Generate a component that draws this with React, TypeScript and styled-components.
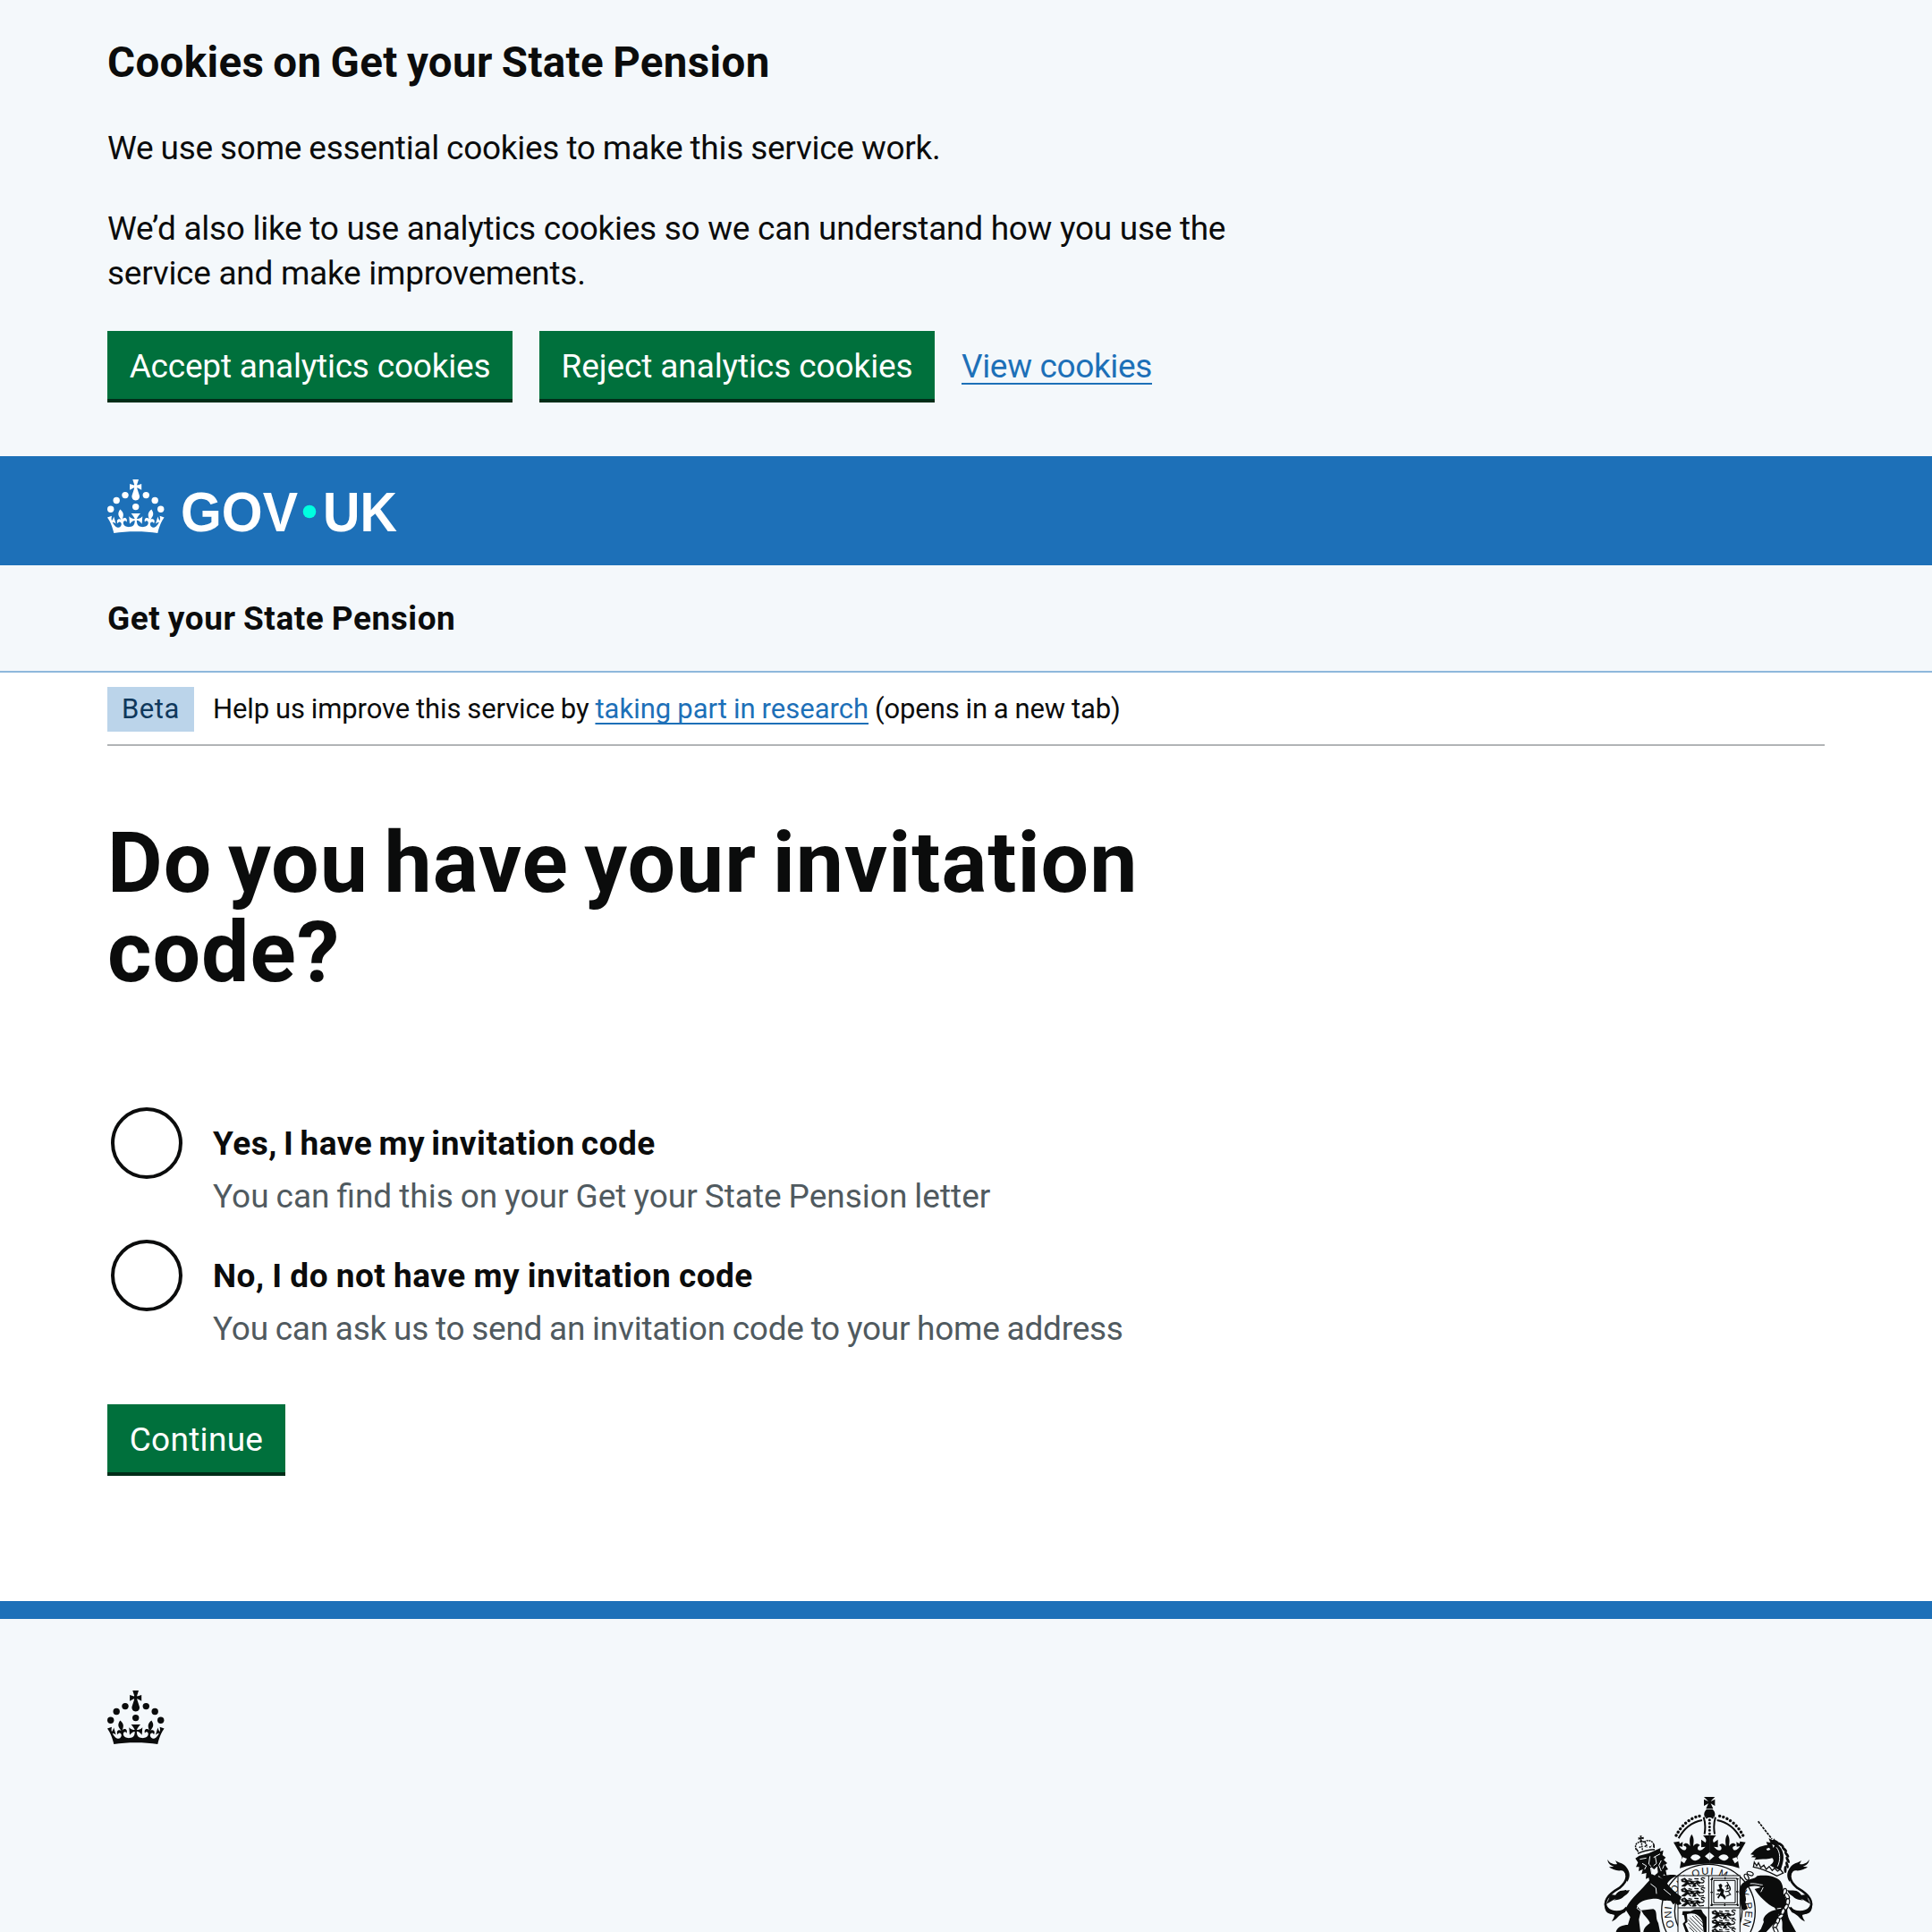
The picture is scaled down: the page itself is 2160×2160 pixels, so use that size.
import React from 'react';
import styled, { createGlobalStyle } from 'styled-components';

const INK = '#0b0c0c';
const PALE = '#f4f8fb';
const BRAND = '#1d70b8';

const GlobalStyle = createGlobalStyle`
  *, *::before, *::after { box-sizing: border-box; }
  body {
    margin: 0;
    background: #fff;
    color: ${INK};
    font-family: Roboto, "Noto Sans", sans-serif;
    font-size: 37px;
    line-height: 50px;
  }
  h1, h2, p { margin: 0; }
`;

interface Spacing {
  $track?: number;
  $word?: number;
}

const Page = styled.div`
  display: flex;
  flex-direction: column;
  height: 2160px;
  overflow: hidden;
`;

const Container = styled.div`
  margin: 0 120px;
`;

const CookieBanner = styled.section`
  height: 510px;
  padding-top: 40px;
  background: ${PALE};
`;

const BannerContent = styled.div`
  display: flex;
  flex-direction: column;
  gap: 40px;
  white-space: nowrap;
`;

const BannerHeading = styled.h2`
  font-size: 47.5px;
  line-height: 60px;
  letter-spacing: 0.35px;
  word-spacing: -2px;
`;

const Copy = styled.p<Spacing>`
  padding-top: 1px;
  margin-bottom: -1px;
  letter-spacing: ${(p) => p.$track ?? 0}px;
  word-spacing: ${(p) => p.$word ?? 0}px;
`;

const ButtonGroup = styled.div`
  display: flex;
  align-items: flex-start;
  gap: 30px;
`;

const Button = styled.button<{ $width: number; $track?: number }>`
  width: ${(p) => p.$width}px;
  height: 80px;
  padding: 15px 0 11px;
  border: 0;
  border-bottom: 4px solid #002d18;
  background: #00703c;
  color: #fff;
  font: inherit;
  letter-spacing: ${(p) => p.$track ?? -0.2}px;
  text-align: center;
  white-space: nowrap;
`;

const Link = styled.a<{ $gap?: number; $track?: number }>`
  color: ${BRAND};
  letter-spacing: ${(p) => p.$track ?? 0}px;
  text-decoration: underline;
  text-decoration-thickness: 2px;
  text-decoration-skip-ink: none;
  text-underline-offset: ${(p) => p.$gap ?? 6}px;
`;

const BannerLink = styled(Link)`
  padding-top: 15px;
`;

const Header = styled.header`
  height: 122px;
  padding-top: 26px;
  background: ${BRAND};
  color: #fff;
`;

const Logo = styled.svg`
  display: block;
  overflow: visible;
`;

const LogoText = styled.text`
  font-family: "Liberation Sans", Arial, sans-serif;
  font-weight: 700;
  font-size: 63px;
`;

const GarterText = styled.text`
  font-family: "Liberation Sans", Arial, sans-serif;
  font-size: 34px;
  letter-spacing: 4px;
  text-anchor: middle;
`;

const ServiceNavigation = styled.div`
  height: 120px;
  padding-top: 35px;
  border-bottom: 2px solid #8eb8dc;
  background: ${PALE};
  font-weight: 700;
  letter-spacing: 0.55px;
  word-spacing: -1.3px;
`;

const PhaseBanner = styled.div`
  display: flex;
  height: 82px;
  padding-top: 16px;
  border-bottom: 2px solid #b1b4b6;
  font-size: 31px;
  white-space: pre;
`;

const Tag = styled.strong`
  width: 97px;
  height: 50px;
  margin-right: 21px;
  background: #bbd4ea;
  color: #0f385c;
  font-weight: 400;
  letter-spacing: 0.6px;
  text-align: center;
`;

const PhaseText = styled.span`
  letter-spacing: -0.1px;
  word-spacing: -0.7px;
`;

const Main = styled.main`
  display: flex;
  flex-direction: column;
  align-items: flex-start;
  height: 956px;
  padding-top: 81px;
`;

const Title = styled.h1`
  width: 1260px;
  font-size: 95px;
  line-height: 100px;
  letter-spacing: 1px;
  word-spacing: -7px;
`;

const Radios = styled.div`
  display: flex;
  flex-direction: column;
  margin: 123px 0 36px;
`;

const RadioItem = styled.div`
  display: flex;
  height: 148px;
  padding-left: 4px;
`;

const RadioCircle = styled.span`
  flex: none;
  width: 80px;
  height: 80px;
  margin-right: 34px;
  border: 4px solid ${INK};
  border-radius: 50%;
`;

const RadioText = styled.div`
  display: flex;
  flex-direction: column;
  gap: 8px;
  padding-top: 16px;
  white-space: nowrap;
`;

const RadioLabel = styled.label<Spacing>`
  font-weight: 700;
  letter-spacing: ${(p) => p.$track}px;
  word-spacing: ${(p) => p.$word}px;
`;

const Hint = styled(Copy)`
  color: #505a5f;
`;

const Footer = styled.footer`
  flex: 1;
  min-height: 0;
  padding-top: 80px;
  border-top: 20px solid ${BRAND};
  background: ${PALE};
`;

const CrestRow = styled.div`
  display: flex;
  justify-content: flex-end;
  margin-top: 50px;
`;

const Crown = () => (
  <g fill="currentColor">
    <circle cx="20" cy="17.6" r="3.7" />
    <circle cx="10.2" cy="23.5" r="3.7" />
    <circle cx="3.7" cy="33.2" r="3.7" />
    <circle cx="31.7" cy="30.6" r="3.7" />
    <circle cx="43.3" cy="17.6" r="3.7" />
    <circle cx="53.2" cy="23.5" r="3.7" />
    <circle cx="59.7" cy="33.2" r="3.7" />
    <path d="M33.1,9.8c.2-.1.3-.3.5-.5l4.6,2.4v-6.8l-4.6,1.5c-.1-.2-.3-.3-.5-.5l1.9-5.9h-6.7l1.9,5.9c-.2.1-.3.3-.5.5l-4.6-1.5v6.8l4.6-2.4c.1.2.3.3.5.5l-2.6,8c-.9,2.8,1.2,5.7,4.1,5.7h0c3,0,5.1-2.9,4.1-5.7l-2.6-8ZM37,37.9s-3.4,3.8-4.1,6.1c2.2,0,4.2-.5,6.4-2.8l-.7,8.5c-2-2.8-4.4-4.1-5.7-3.8.1,3.1.5,6.7,5.8,7.2,3.7.3,6.7-1.5,7-3.8.4-2.6-2-4.3-3.7-1.6-1.4-4.5,2.4-6.1,4.9-3.2-1.9-4.5-1.8-7.7,2.4-10.9,3,4,2.6,7.3-1.2,11.1,2.4-1.3,6.2,0,4,4.6-1.2-2.8-3.7-2.2-4.2.2-.3,1.7.7,3.7,3,4.2,1.9.3,4.7-.9,7-5.9-1.3,0-2.4.7-3.9,1.7l2.4-8c.6,2.3,1.4,3.7,2.2,4.5.6-1.6.5-2.8,0-5.3l5,1.8c-2.6,3.6-5.2,8.7-7.3,17.5-7.4-1.1-15.7-1.7-24.5-1.7h0c-8.8,0-17.1.6-24.5,1.7-2.1-8.9-4.7-13.9-7.3-17.5l5-1.8c-.5,2.5-.6,3.7,0,5.3.8-.8,1.6-2.3,2.2-4.5l2.4,8c-1.5-1-2.6-1.7-3.9-1.7,2.3,5,5.2,6.2,7,5.9,2.3-.4,3.3-2.4,3-4.2-.5-2.4-3-3.1-4.2-.2-2.2-4.6,1.6-6,4-4.6-3.7-3.7-4.2-7.1-1.2-11.1,4.2,3.2,4.3,6.4,2.4,10.9,2.5-2.8,6.3-1.3,4.9,3.2-1.8-2.7-4.1-1-3.7,1.6.3,2.3,3.3,4.1,7,3.8,5.4-.5,5.7-4.2,5.8-7.2-1.3-.2-3.7,1-5.7,3.8l-.7-8.5c2.2,2.3,4.2,2.7,6.4,2.8-.7-2.3-4.1-6.1-4.1-6.1h10.6,0Z" />
  </g>
);

const Tail = () => (
  <g>
    <path d="M98 260C124 280 122 308 92 332C50 356 36 380 50 404C62 424 96 424 116 398" fill="none" stroke={INK} strokeWidth="8" />
    <path d="M52 237C60 252 76 254 84 252L78 240C90 250 104 246 116 264C128 280 128 296 118 312C114 290 110 272 96 274C82 276 64 268 57 262L73 261C60 256 52 248 52 237Z" />
    <path d="M126 339C108 344 92 334 78 356L56 353C62 362 54 372 48 386L72 372C90 362 116 366 126 339Z" />
    <path d="M112 352C106 368 90 372 72 374L94 358Z" />
    <path d="M44 385C38 410 52 420 68 420C80 420 74 430 66 445C84 438 86 424 110 414L124 392C100 414 66 412 54 398Z" />
  </g>
);

/* One lion passant, repeated down a quarter of the shield. */
const LionPassant = ({ x, y }: { x: number; y: number }) => (
  <g transform={`translate(${x} ${y})`}>
    <path
      d="M0 6L12 1L20 9L13 15L2 13ZM16 10C28 5 38 16 50 11C58 8 62 13 64 20L52 19C44 24 34 20 24 20L12 29L1 28L13 19ZM44 16L50 29L36 30"
      stroke={INK}
      strokeWidth="2"
      strokeLinejoin="round"
    />
    <path d="M60 15C76 22 82 9 70 7C62 3 70 -3 80 3M22 20L33 29M52 20L62 29L76 27M24 4L36 6M44 3L58 4" stroke={INK} strokeWidth="3.5" fill="none" />
    <path d="M6 8L13 9M24 14L31 16M42 17L50 14" stroke={PALE} strokeWidth="2.5" />
  </g>
);

const CrownHalf = () => (
  <g>
    <path d="M360 91C326 98 292 128 277 168" fill="none" stroke={INK} strokeWidth="10" strokeLinecap="round" strokeDasharray="0.1 13" />
    <path d="M369 105C332 112 306 136 290 166" fill="none" stroke={INK} strokeWidth="6" />
    <path d="M374 95C380 112 380 134 377 152" fill="none" stroke={INK} strokeWidth="6" />
    <path d="M273 179L292 176L294 184L304 178L303 194L292 192C300 206 312 210 316 200C318 190 308 194 306 188C312 178 324 182 328 192C330 184 322 170 334 152C346 170 338 184 340 192C346 180 358 182 362 190C354 192 352 200 356 205C364 210 374 200 380 194L366 196V170L380 180C386 172 380 164 372 156H394.500V251Q340 250 294 266L301 228Z" />
    <path d="M330 230C336 218 354 216 364 229C356 243 338 245 330 230Z" fill={PALE} />
    <path d="M297 241L304 229L318 234L309 250Z" fill={PALE} />
    <path d="M394.500 212L378 226L394.500 240Z" fill={PALE} />
  </g>
);

const Lion = () => (
  <g>
    <path d="M205 293C236 288 252 322 278 346L300 362L294 376L300 386L286 390L280 382L272 388L264 376L250 374C238 378 226 368 214 368C190 368 162 374 150 392L164 408L157 438L162 480H80C84 462 104 456 120 456L128 430L112 404C122 376 154 350 182 318Z" />
    <path d="M165 407L205 403C222 410 210 432 222 450L228 480H172C174 462 188 456 194 450C188 432 176 430 165 407Z" />
    <path d="M238 290C254 292 268 284 288 292C266 296 254 312 248 326L232 312Z" />
    <path d="M196 318L214 332L216 352M158 388L150 400L165 412M240 336L264 356" fill="none" stroke={PALE} strokeWidth="3" />
    <path d="M145 233L158 224L190 216L230 198L228 210L239 206L236 222L247 230L240 238L252 249L245 254L255 270L247 273L251 294L240 286L236 303L224 292L212 300L194 318L190 298L180 302L182 282L166 286L170 270L156 276L158 262L147 262L154 247Z" />
    <path d="M160 236L182 232M206 230L228 218M194 226L190 252L198 260M212 228L216 250L206 258M196 264L200 286M218 262L216 284M168 250L182 258L176 270M232 240L224 256L232 276M242 254L236 268" fill="none" stroke={PALE} strokeWidth="3" />
    <path d="M198 262L208 270L218 260L221 280L210 290L199 285Z" fill={PALE} />
    <path d="M153 217C180 204 194 204 210 203L205 192C212 176 196 170 182 178C182 170 172 168 164 174C150 176 144 186 148 202Z" fill={PALE} />
    <path d="M153 217C174 206 192 204 210 203M155 211L148 201M208 198L207 186" fill="none" stroke={INK} strokeWidth="4.500" />
    <path d="M148 204C142 190 148 180 160 178C172 174 182 178 184 196M174 178C192 166 212 178 206 198M166 182L169 206M158 197L165 193M176 194L184 189M192 196L200 191" fill="none" stroke={INK} strokeWidth="4.500" strokeDasharray="6 2.500" />
    <path d="M160 157H167L165 163L173 161V169L165 167L169 178H160L162 168L155 171V162L162 164Z" />
  </g>
);

const MANE = [
  [620, 180, -50], [634, 188, -50], [645, 203, -45], [653, 220, -35], [656, 238, -25], [654, 255, -15], [648, 270, 0],
];
const CHAIN = [
  [530, 284, 20], [518, 296, 60], [646, 345, 100], [654, 360, 60], [656, 379, 95], [650, 397, 120],
  [640, 412, 110], [632, 428, 150], [622, 443, 110], [614, 459, 120], [616, 474, 60],
];

const Unicorn = () => (
  <g>
    <path d="M557 109L603 168" stroke={INK} strokeWidth="5" strokeDasharray="9 3" />
    <path d="M531 220L546 204C560 192 576 190 588 188L584 178L598 180L592 166L606 172L612 166L614 178L624 188C646 208 644 234 638 254L632 274C618 268 604 262 596 256C608 250 612 240 604 232C592 236 576 236 562 236L544 238L550 230L533 229L544 222Z" />
    {MANE.map(([x, y, a]) => (
      <ellipse key={`${x}-${y}`} cx={x} cy={y} rx="4.500" ry="12" transform={`rotate(${a} ${x} ${y})`} />
    ))}
    <path d="M584 201L594 197L598 204L588 207ZM604 186L612 190L608 198" fill={PALE} />
    <path d="M618 196C632 212 632 240 622 260" fill="none" stroke={PALE} strokeWidth="3" />
    <path d="M544 246L541 262C566 266 590 276 620 292L641 282L631 270L622 276L612 266L604 274L594 260L584 270L576 256L566 264L558 248L552 258Z" fill={PALE} stroke={INK} strokeWidth="4" />
    <path d="M511 312C530 300 544 304 554 292C584 288 616 292 632 310C644 328 638 346 650 368C658 392 650 414 662 440L684 480H640C634 460 644 446 630 428L612 398C588 388 560 360 545 336L566 330C552 324 532 324 520 332C504 348 522 366 514 380L522 402L508 408C494 390 500 370 494 350C494 332 498 320 511 312Z" />
    <path d="M566 470L576 446C568 430 596 406 622 406L630 440L606 456L584 480H556Z" />
    <path d="M530 318C550 316 560 322 572 322M566 346L574 330M634 400L620 402" fill="none" stroke={PALE} strokeWidth="3" />
    <g fill={PALE} stroke={INK} strokeWidth="3.500">
      {CHAIN.map(([x, y, a]) => (
        <ellipse key={`${x}-${y}`} cx={x} cy={y} rx="11" ry="6" transform={`rotate(${a} ${x} ${y})`} />
      ))}
    </g>
  </g>
);

const Crest = () => (
  <Logo width="260" height="160" viewBox="0 0 780 480" fill={INK} role="img" aria-label="Royal coat of arms">
    <defs>
      <path id="garter" d="M390 535A124 124 0 0 1 390 287A124 124 0 0 1 390 535" />
    </defs>
    <Tail />
    <g transform="translate(780 0) scale(-1 1)">
      <Tail />
    </g>
    <circle cx="390" cy="410" r="157" fill={PALE} stroke={INK} strokeWidth="4" />
    <circle cx="390" cy="410" r="113" fill="none" stroke={INK} strokeWidth="4" />
    <GarterText>
      <textPath href="#garter" startOffset="50%">ONI SOIT QUI MAL Y PEN</textPath>
    </GarterText>
    <rect x="288" y="291" width="208" height="200" fill={PALE} stroke={INK} strokeWidth="3" />
    <path d="M391 291V480M288 399H496" fill="none" stroke={INK} strokeWidth="3" />
    <LionPassant x={299} y={298} />
    <LionPassant x={299} y={331} />
    <LionPassant x={299} y={364} />
    <LionPassant x={402} y={406} />
    <LionPassant x={402} y={437} />
    <LionPassant x={402} y={468} />
    <path d="M401 300H487V389H401ZM408 307H480V382H408Z" fill="none" stroke={INK} strokeWidth="3" />
    <path d="M401 300H487V389H401Z" fill="none" stroke={INK} strokeWidth="8" strokeDasharray="4 39" />
    <path d="M424 322L432 318L437 324L434 332L443 340L440 352L449 362L445 372L438 362L430 358L424 368L420 364L428 352L432 344L422 344L418 338L428 336Z" />
    <path d="M446 328L456 322L452 336L464 330M446 344C462 346 468 338 460 326L452 312M416 354L426 352M450 360L464 354L458 346" fill="none" stroke={INK} strokeWidth="3.500" />
    <path d="M304 410H330L344 404L366 404L372 416L384 430V480H374L370 444C360 422 344 414 318 420L320 446L312 452L324 480H314L304 452L312 444L308 424L302 422Z" />
    <path d="M328 432L372 476M336 426L374 464M322 438L364 480M322 450L352 480M326 464L342 480M346 424L372 450" stroke={INK} strokeWidth="2.500" />
    <Lion />
    <Unicorn />
    <path d="M375 27H412L402 37L398 42L412 35V57L398 49L406 66H382L390 49L375 57V35L390 42L385 37Z" />
    <path d="M384 68H404C416 80 412 90 409 95H379C374 88 374 78 384 68Z" />
    <CrownHalf />
    <g transform="translate(788 0) scale(-1 1)">
      <CrownHalf />
    </g>
    <path d="M382 99C388 91 400 91 406 99" fill="none" stroke={INK} strokeWidth="5" />
    <path d="M394 104V152" stroke={INK} strokeWidth="9" strokeLinecap="round" strokeDasharray="0.1 11.500" />
  </Logo>
);

const options = [
  {
    label: 'Yes, I have my invitation code',
    labelTrack: 0.5,
    labelWord: -2.5,
    hint: 'You can find this on your Get your State Pension letter',
    hintTrack: 0,
    hintWord: -1.2,
  },
  {
    label: 'No, I do not have my invitation code',
    labelTrack: 0.5,
    labelWord: -1,
    hint: 'You can ask us to send an invitation code to your home address',
    hintTrack: -0.25,
    hintWord: -1,
  },
];

export default function App() {
  return (
    <Page>
      <GlobalStyle />
      <CookieBanner>
        <Container>
          <BannerContent>
            <BannerHeading>Cookies on Get your State Pension</BannerHeading>
            <Copy $track={-0.28} $word={-0.7}>We use some essential cookies to make this service work.</Copy>
            <Copy $track={-0.28}>
              We’d also like to use analytics cookies so we can understand how you use the
              <br />
              service and make improvements.
            </Copy>
            <ButtonGroup>
              <Button $width={453}>Accept analytics cookies</Button>
              <Button $width={442} $track={-0.1}>Reject analytics cookies</Button>
              <BannerLink href="#" $track={-0.35}>View cookies</BannerLink>
            </ButtonGroup>
          </BannerContent>
        </Container>
      </CookieBanner>
      <Header>
        <Container>
          <Logo width="324" height="60" viewBox="0 0 324 60" role="img" aria-label="GOV.UK">
            <Crown />
            <circle cx="226" cy="36" r="7.3" fill="#00ffe0" />
            <LogoText x="82" y="58" fill="#fff" textLength="131" lengthAdjust="spacingAndGlyphs">GOV</LogoText>
            <LogoText x="241" y="58" fill="#fff" textLength="83" lengthAdjust="spacingAndGlyphs">UK</LogoText>
          </Logo>
        </Container>
      </Header>
      <ServiceNavigation>
        <Container>Get your State Pension</Container>
      </ServiceNavigation>
      <Container>
        <PhaseBanner>
          <Tag>Beta</Tag>
          <PhaseText>
            {'Help us improve this service by '}
            <Link href="#" $gap={5}>taking part in research</Link>
            {' (opens in a new tab)'}
          </PhaseText>
        </PhaseBanner>
        <Main>
          <Title>Do you have your invitation code?</Title>
          <Radios>
            {options.map((o) => (
              <RadioItem key={o.label}>
                <RadioCircle />
                <RadioText>
                  <RadioLabel $track={o.labelTrack} $word={o.labelWord}>{o.label}</RadioLabel>
                  <Hint $track={o.hintTrack} $word={o.hintWord}>{o.hint}</Hint>
                </RadioText>
              </RadioItem>
            ))}
          </Radios>
          <Button $width={199} $track={0.3}>Continue</Button>
        </Main>
      </Container>
      <Footer>
        <Container>
          <Logo width="64" height="60" viewBox="0 0 64 60" aria-hidden="true">
            <Crown />
          </Logo>
          <CrestRow>
            <Crest />
          </CrestRow>
        </Container>
      </Footer>
    </Page>
  );
}
